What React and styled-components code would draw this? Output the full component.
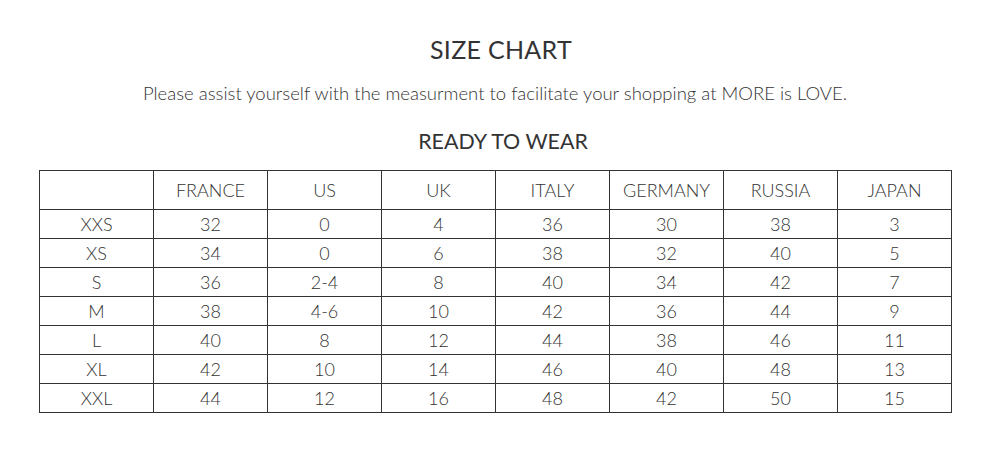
import React from "react";
import styled, { createGlobalStyle } from "styled-components";

const Global = createGlobalStyle`
  html, body { margin: 0; padding: 0; background: #fff; }
  body { font-family: Lato, "Open Sans", sans-serif; color: #333; }
`;

const Page = styled.div`
  width: 1000px;
  padding-top: 34px;
  display: flex;
  flex-direction: column;
  align-items: center;
`;

const Title = styled.h1`
  margin: 0 0 0 2px;
  font-size: 25px;
  line-height: 30px;
  font-weight: 400;
  letter-spacing: 0.3px;
  color: #333;
`;

const Subtitle = styled.p`
  margin: 18px 10px 0 0;
  font-size: 18.5px;
  line-height: 22px;
  font-weight: 300;
  color: #333;
`;

const Section = styled.h2`
  margin: 24px 0 0 6px;
  font-size: 21.4px;
  line-height: 26px;
  font-weight: 400;
  color: #333;
`;

const Table = styled.table`
  align-self: flex-start;
  margin: 16px 0 0 39px;
  width: 913px;
  border-collapse: collapse;
  table-layout: fixed;
`;

const HeadCell = styled.th`
  border: 1px solid #333;
  height: 38px;
  padding: 0;
  font-size: 18px;
  font-weight: 300;
  text-align: center;
  color: #333;
`;

const Cell = styled.td`
  border: 1px solid #333;
  height: 28px;
  padding: 0;
  font-size: 18px;
  font-weight: 300;
  text-align: center;
  color: #333;
`;

const columns = ["", "FRANCE", "US", "UK", "ITALY", "GERMANY", "RUSSIA", "JAPAN"];
const rows = [
  ["XXS", "32", "0", "4", "36", "30", "38", "3"],
  ["XS", "34", "0", "6", "38", "32", "40", "5"],
  ["S", "36", "2-4", "8", "40", "34", "42", "7"],
  ["M", "38", "4-6", "10", "42", "36", "44", "9"],
  ["L", "40", "8", "12", "44", "38", "46", "11"],
  ["XL", "42", "10", "14", "46", "40", "48", "13"],
  ["XXL", "44", "12", "16", "48", "42", "50", "15"],
];

export default function App() {
  return (
    <>
      <Global />
      <Page>
        <Title>SIZE CHART</Title>
        <Subtitle>
          Please assist yourself with the measurment to facilitate your shopping at MORE is LOVE.
        </Subtitle>
        <Section>READY TO WEAR</Section>
        <Table>
          <thead>
            <tr>
              {columns.map((c, i) => (
                <HeadCell key={i}>{c}</HeadCell>
              ))}
            </tr>
          </thead>
          <tbody>
            {rows.map((r) => (
              <tr key={r[0]}>
                {r.map((v, i) => (
                  <Cell key={i}>{v}</Cell>
                ))}
              </tr>
            ))}
          </tbody>
        </Table>
      </Page>
    </>
  );
}
